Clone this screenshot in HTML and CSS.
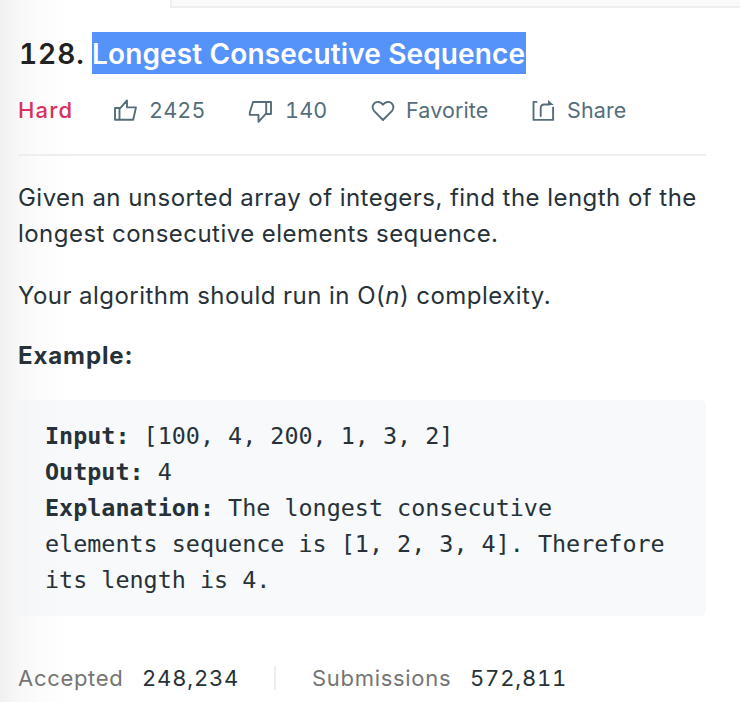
FILE: index.html
```html
<!DOCTYPE html>
<html lang="en">
<head>
<meta charset="utf-8">
<title>Longest Consecutive Sequence</title>
<link rel="stylesheet" href="styles.css">
</head>
<body>
<div class="tabs"></div>
<main class="problem">
  <h1 class="title"><span class="number">128.</span> <span class="selected">Longest Consecutive Sequence</span></h1>
  <div class="actions">
    <span class="difficulty">Hard</span>
    <span class="action like"><svg class="icon" viewBox="0 0 24 24"><path d="M2 9h4.500v11.800H2zM6.500 9.800L14 1.500v6.900h9l-2.800 12.400H6.500"/></svg><span class="label">2425</span></span>
    <span class="action dislike"><svg class="icon" viewBox="0 0 24 24"><path d="M23 15h-4.800V3H23zM18.200 14.300l-7.700 8.500v-6.900H1.800v-2.400L5 3h13.200"/></svg><span class="label">140</span></span>
    <span class="action favorite"><svg class="icon" viewBox="0 0 24 24"><path d="M12 21L3.200 12.200C-.6 7.500 3.400 2.300 7.800 3c2.200.3 3.400 1.500 4.200 2.700.8-1.200 2-2.400 4.200-2.700 4.400-.7 8.400 4.500 4.600 9.200z"/></svg><span class="label">Favorite</span></span>
    <span class="action share"><svg class="icon" viewBox="0 0 24 24"><path d="M5.500 2.900H2.500v18h19.600V8.500M9.700 17V9q0-3.500 3.500-3.500h5"/><path class="solid" d="M17 1l5.800 5H17z"/></svg><span class="label">Share</span></span>
  </div>
  <section class="description">
    <p class="prompt"><span class="line">Given an unsorted array of integers, find the length of the</span> <span class="line">longest consecutive elements sequence.</span></p>
    <p><span class="line">Your algorithm should run in O(<em>n</em>) complexity.</span></p>
    <p class="heading"><strong>Example:</strong></p>
    <pre class="example"><b>Input:</b> [100, 4, 200, 1, 3, 2]
<b>Output:</b> 4
<b>Explanation:</b><span> The longest consecutive</span>
<span>elements sequence is [1, 2, 3, 4]. Therefore</span>
<span>its length is 4.</span></pre>
  </section>
  <footer class="stats">
    <span class="name accepted">Accepted</span><span class="value">248,234</span>
    <span class="divider"></span>
    <span class="name submissions">Submissions</span><span class="value">572,811</span>
  </footer>
</main>
</body>
</html>
```
FILE: styles.css
```css
* { box-sizing: border-box; }

body {
  margin: 0;
  height: 702px;
  overflow: hidden;
  background: linear-gradient(to right, #f1f1f1 0, #f8f8f8 20px, #fcfcfc 42px, #fff 72px);
  font-family: Inter, "Liberation Sans", sans-serif;
  color: #263238;
}

.tabs {
  height: 8px;
  margin-left: 170px;
  background: #fafafa;
  border-left: 2px solid #eee;
  border-bottom: 2px solid #eee;
}

.problem { padding: 24px 34px 0 18px; }

.title {
  display: flex;
  height: 42px;
  margin: 0;
  font-size: 28px;
  line-height: 44px;
  font-weight: 600;
  color: #212121;
  white-space: nowrap;
}

.number { width: 74px; padding-left: 1px; letter-spacing: 1px; font-variant-numeric: tabular-nums; }
.selected { width: 434px; background: #5592fa; color: #fff; letter-spacing: .14px; }

.actions {
  display: flex;
  height: 82px;
  border-bottom: 2px solid #eee;
  font-size: 22px;
  line-height: 73px;
  color: #546e7a;
  white-space: nowrap;
  font-variant-numeric: tabular-nums;
}

.difficulty { width: 95px; color: #d8315f; font-weight: 500; letter-spacing: 1.2px; line-height: 72px; }
.action { display: flex; }
.like { width: 135px; font-size: 21.500px; letter-spacing: .2px; }
.dislike { width: 124px; font-size: 21.500px; letter-spacing: .2px; }
.favorite { width: 159px; }
.favorite, .share { font-size: 21.500px; letter-spacing: .1px; }
.label { margin-left: 12px; }
.dislike .label { margin-left: 13px; }
.favorite .label { margin-left: 10px; }

.icon {
  flex: none;
  width: 24px;
  height: 24px;
  margin-top: 25px;
  fill: none;
  stroke: currentColor;
  stroke-width: 1.9;
  stroke-linejoin: round;
  stroke-linecap: round;
}
.favorite .icon { margin-left: -1px; margin-right: 1px; }
.icon .solid { fill: currentColor; stroke: none; }

.description { padding-top: 24px; font-size: 24px; line-height: 36px; letter-spacing: .46px; }
.description p { margin: 0 0 24px; white-space: nowrap; }
.description .prompt { margin-bottom: 26px; }
.description .heading { margin-bottom: 26px; letter-spacing: .9px; }
.line { display: block; }

.example {
  height: 216px;
  margin: 0;
  padding: 18px 27px;
  border-radius: 6px;
  background: rgba(239, 243, 247, .5);
  font-family: "DejaVu Sans Mono", monospace;
  font-size: 23.4px;
  line-height: 36px;
  letter-spacing: 0;
  white-space: pre;
}

.stats {
  display: flex;
  align-items: center;
  margin-top: 44px;
  height: 36px;
  font-size: 22px;
  white-space: nowrap;
}
.name { color: #757575; letter-spacing: .7px; }
.accepted { width: 124px; }
.submissions { width: 158px; }
.value { width: 98px; letter-spacing: .8px; font-variant-numeric: tabular-nums; }
.divider { width: 2px; height: 24px; margin: 0 36px 0 34px; background: #eee; }
```
